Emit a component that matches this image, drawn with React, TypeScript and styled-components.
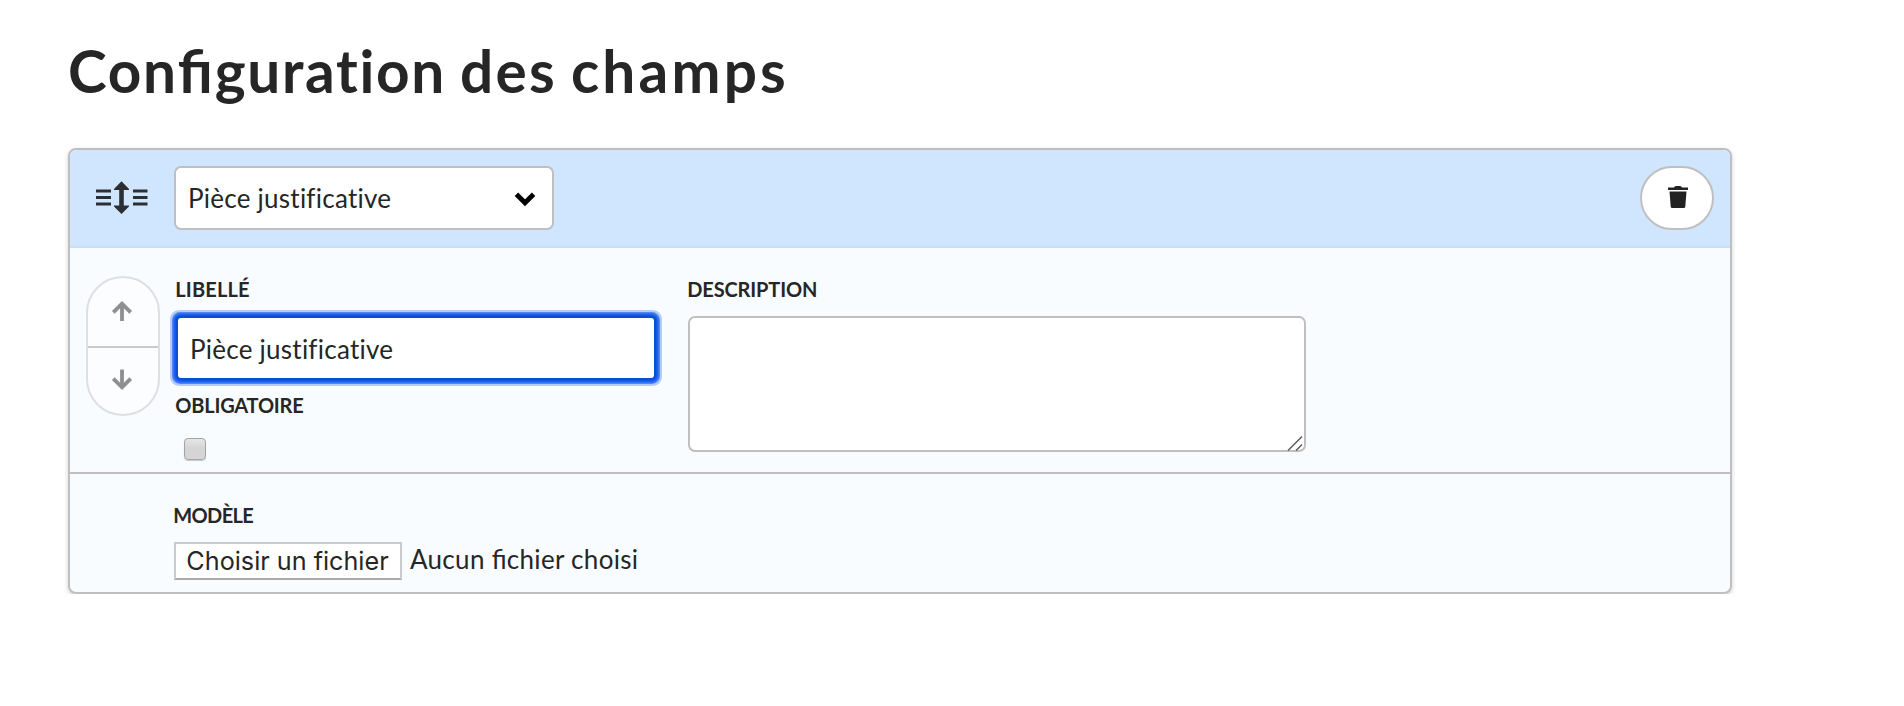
import React from "react";
import styled, { createGlobalStyle } from "styled-components";

const GlobalStyle = createGlobalStyle`
  *, *::before, *::after { box-sizing: border-box; }
  body {
    margin: 0;
    background: #fff;
    color: #262626;
    font-family: Lato, "Open Sans", sans-serif;
    font-variant-ligatures: none;
  }
  input, select, textarea, button { font: inherit; color: inherit; margin: 0; font-variant-ligatures: none; }
`;

const Page = styled.main`
  padding: 30px 172px 0 68px;
`;

const Title = styled.h1`
  margin: 0 0 38px;
  height: 80px;
  font-size: 58.5px;
  line-height: 80px;
  font-weight: 700;
  letter-spacing: 1.7px;
  word-spacing: -2px;
  white-space: nowrap;
`;

const Word = styled.span<{ $track: number }>`
  letter-spacing: ${(p) => p.$track}px;
`;

const Ligature = styled.span`
  font-feature-settings: "liga" 1;
`;

const Card = styled.section`
  width: 1664px;
  height: 446px;
  border: 2px solid #bfbfbf;
  border-radius: 8px;
  background: #f8fcff;
  box-shadow: 0 2px 5px rgba(0, 0, 0, 0.18);
  overflow: hidden;
`;

const CardHeader = styled.header`
  display: flex;
  align-items: flex-start;
  height: 98px;
  padding: 16px 16px 0 26px;
  background: #d0e6ff;
  border-bottom: 2px solid #c8dff3;
`;

const DragHandle = styled.span`
  width: 78px;
  height: 64px;
  padding-top: 15px;
  svg { display: block; }
`;

const SelectBox = styled.div`
  position: relative;
  width: 380px;
  height: 64px;
  svg { position: absolute; right: 18px; top: 26px; pointer-events: none; }
`;

const Select = styled.select`
  appearance: none;
  width: 100%;
  height: 100%;
  padding: 0 50px 0 12px;
  border: 2px solid #bfbfbf;
  border-radius: 7px;
  background: #fff;
  font-size: 26px;
  letter-spacing: 0.25px;
`;

const DeleteButton = styled.button`
  display: flex;
  justify-content: center;
  width: 74px;
  height: 64px;
  margin-left: auto;
  padding: 18px 0 0 2px;
  border: 2px solid #bfbfbf;
  border-radius: 32px;
  background: #fff;
`;

const Fields = styled.div`
  display: flex;
  height: 226px;
  padding: 27px 0 0 16px;
  border-bottom: 2px solid #bfbfbf;
`;

const MoveButtons = styled.div`
  width: 74px;
  height: 140px;
  margin: 1px 16px 0 0;
  border: 2px solid #dedfe0;
  border-radius: 37px;
  background: #fbfdff;
  overflow: hidden;
`;

const MoveButton = styled.button`
  display: flex;
  justify-content: center;
  width: 70px;
  height: 68px;
  padding: 0;
  border: 0;
  background: transparent;
  svg { overflow: visible; }
  & + & { border-top: 2px solid #c9cacb; }
`;

const Column = styled.div<{ $gap?: number }>`
  display: flex;
  flex-direction: column;
  align-items: flex-start;
  margin-left: ${(p) => p.$gap ?? 0}px;
`;

const Label = styled.label<{ $track: number }>`
  height: 28px;
  margin-left: -0.7px;
  font-size: 20px;
  line-height: 28px;
  font-weight: 700;
  letter-spacing: ${(p) => p.$track}px;
  text-transform: uppercase;
`;

const TextInput = styled.input`
  width: 476px;
  height: 60px;
  margin: 15px 0 13px 2px;
  padding: 1px 12px 0;
  border: 0;
  border-radius: 3px;
  background: #fff;
  outline: none;
  font-size: 26px;
  letter-spacing: 0.25px;
  box-shadow:
    0 0 0 2px #0a50d0,
    0 0 0 3px #0f58df,
    0 0 0 4px #1e63ec,
    0 0 0 5px #3671f2,
    0 0 0 6px #5185f5,
    0 0 0 8px #b4ccfb;
`;

const Checkbox = styled.input`
  appearance: none;
  width: 22px;
  height: 22px;
  margin: 19px 0 0 8px;
  border: 1.5px solid #a3a4a5;
  border-radius: 4px;
  background: linear-gradient(#e6e6e6, #d5d5d5 45%, #d5d5d5);
  box-shadow: 0 1px 1px rgba(0, 0, 0, 0.2);
`;

const AreaBox = styled.div`
  position: relative;
  width: 618px;
  height: 136px;
  margin-top: 13px;
  svg { position: absolute; right: 3px; bottom: 1px; }
`;

const TextArea = styled.textarea`
  display: block;
  width: 100%;
  height: 100%;
  border: 2px solid #bfbfbf;
  border-radius: 7px;
  background: #fff;
  resize: none;
`;

const Attachment = styled.div`
  padding: 27px 0 0 104px;
`;

const FileRow = styled.div`
  display: flex;
  margin-top: 13px;
`;

const FileButton = styled.button`
  width: 228px;
  height: 38px;
  padding: 0 1px 0 0;
  border: 2px solid #c9cbcd;
  border-bottom-color: #a9abad;
  background: #fff;
  font-family: Inter, sans-serif;
  font-size: 25.2px;
  line-height: 34px;
  white-space: nowrap;
`;

const FileStatus = styled.span`
  margin-left: 8px;
  font-size: 26px;
  line-height: 34px;
  letter-spacing: 0.3px;
  white-space: nowrap;
`;

const HandleIcon = () => (
  <svg width="52" height="34" viewBox="0 0 52 34" fill="#2b2f33">
    <path d="M0 8.500h15v3H0zM0 15h15v3H0zM0 21.500h15v3H0zM37 8.500h14.500v3H37zM37 15h14.500v3H37zM37 21.500h14.500v3H37z" />
    <path d="M25.500 0.300L33 8v1h-5.200v15.500H33v1L25.500 33 18 25.500v-1h5.200V9H18V8z" />
  </svg>
);

const ChevronIcon = () => (
  <svg width="22" height="16" viewBox="0 0 22 16" fill="none" stroke="#000" strokeWidth="4.800" strokeLinecap="butt">
    <path d="M2.400 2.200L11 10.800L19.600 2.200" />
  </svg>
);

const TrashIcon = () => (
  <svg width="20" height="22" viewBox="0 0 20 22" fill="#222">
    <path d="M0 1.500h6Q6.500 0 8 0h4q1.500 0 2 1.500h6V4H0zM1.500 5.500h17L17.300 20.500Q17.200 22 15.800 22H4.200Q2.800 22 2.700 20.500z" />
  </svg>
);

const ArrowIcon = ({ down = false }: { down?: boolean }) => (
  <svg width="20" height="68" viewBox="0 0 20 68" fill="none" stroke="#8e8f91" strokeWidth="3.800">
    {down ? <path d="M9 21.500V39M0.300 30.700L9 39.400L17.700 30.700" /> : <path d="M9 43V26M0.300 34.300L9 25.600L17.700 34.300" />}
  </svg>
);

const ResizeGrip = () => (
  <svg width="16" height="16" viewBox="0 0 16 16" fill="none" stroke="#5c5c5c" strokeWidth="1.500">
    <path d="M1 15.500L15 1.500M9 15.500L15 9.500" />
  </svg>
);

export default function App() {
  return (
    <Page>
      <GlobalStyle />
      <Title>
        Con<Ligature>fi</Ligature>guration <Word $track={2.3}>des</Word> <Word $track={3.2}>champs</Word>
      </Title>
      <Card>
        <CardHeader>
          <DragHandle><HandleIcon /></DragHandle>
          <SelectBox>
            <Select aria-label="Type de champ">
              <option>Pièce justificative</option>
            </Select>
            <ChevronIcon />
          </SelectBox>
          <DeleteButton aria-label="Supprimer"><TrashIcon /></DeleteButton>
        </CardHeader>
        <Fields>
          <MoveButtons>
            <MoveButton aria-label="Monter"><ArrowIcon /></MoveButton>
            <MoveButton aria-label="Descendre"><ArrowIcon down /></MoveButton>
          </MoveButtons>
          <Column>
            <Label htmlFor="libelle" $track={0.15}>Libellé</Label>
            <TextInput id="libelle" defaultValue="Pièce justificative" />
            <Label htmlFor="obligatoire" $track={-0.2}>Obligatoire</Label>
            <Checkbox id="obligatoire" type="checkbox" />
          </Column>
          <Column $gap={34}>
            <Label htmlFor="description" $track={-0.15}>Description</Label>
            <AreaBox>
              <TextArea id="description" />
              <ResizeGrip />
            </AreaBox>
          </Column>
        </Fields>
        <Attachment>
          <Label as="div" $track={-0.65}>Modèle</Label>
          <FileRow>
            <FileButton>Choisir un fichier</FileButton>
            <FileStatus>Aucun <Ligature>fi</Ligature>chier choisi</FileStatus>
          </FileRow>
        </Attachment>
      </Card>
    </Page>
  );
}
